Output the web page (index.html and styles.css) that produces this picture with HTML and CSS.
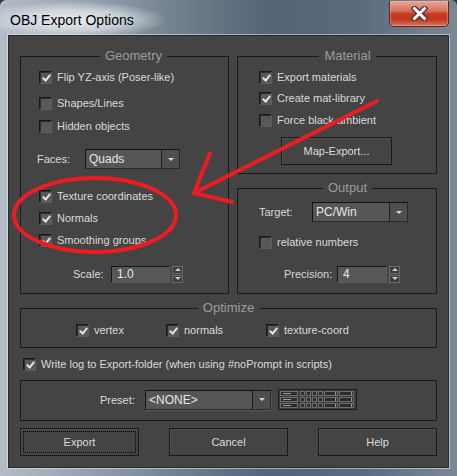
FILE: index.html
```html
<!DOCTYPE html>
<html>
<head>
<meta charset="utf-8">
<title>OBJ Export Options</title>
<link rel="stylesheet" href="styles.css">
</head>
<body>
<div class="window">
  <div class="titlebar">
    <span class="title">OBJ Export Options</span>
    <div class="close">
      <svg width="17" height="15" viewBox="0 0 17 15"><path d="M3.5 2.5 L13.5 12.5 M13.5 2.5 L3.5 12.5" stroke="#4a3434" stroke-width="5.5" stroke-linecap="square" fill="none"/><path d="M3.5 2.5 L13.5 12.5 M13.5 2.5 L3.5 12.5" stroke="#ffffff" stroke-width="3" stroke-linecap="square" fill="none"/></svg>
    </div>
  </div>
  <div class="client">
    <div class="top">
      <div class="group geo">
        <div class="legend">Geometry</div>
        <div class="row mt10"><span class="cb on"></span>Flip YZ-axis (Poser-like)</div>
        <div class="row mt6"><span class="cb"></span>Shapes/Lines</div>
        <div class="row mt3"><span class="cb"></span>Hidden objects</div>
        <div class="row mt13">
          <span class="lbl faces-lbl">Faces:</span>
          <div class="dd dd-faces"><span class="dd-text">Quads</span><span class="dd-btn"></span></div>
        </div>
        <div class="row mt17"><span class="cb on"></span>Texture coordinates</div>
        <div class="row mt2"><span class="cb on"></span>Normals</div>
        <div class="row mt2"><span class="cb on"></span>Smoothing groups</div>
        <div class="row mt14">
          <span class="lbl scale-lbl">Scale:</span>
          <div class="num scale-num">1.0</div>
          <div class="spin"><span class="up"></span><span class="down"></span></div>
        </div>
      </div>
      <div class="rcol">
        <div class="group mat">
          <div class="legend">Material</div>
          <div class="row mt10"><span class="cb on"></span>Export materials</div>
          <div class="row mt1"><span class="cb on"></span>Create mat-library</div>
          <div class="row mt2"><span class="cb"></span>Force black ambient</div>
          <div class="btn map-btn">Map-Export...</div>
        </div>
        <div class="group out">
          <div class="legend">Output</div>
          <div class="row mt13">
            <span class="lbl target-lbl">Target:</span>
            <div class="dd dd-target"><span class="dd-text">PC/Win</span><span class="dd-btn"></span></div>
          </div>
          <div class="row mt10"><span class="cb"></span>relative numbers</div>
          <div class="row mt12">
            <span class="lbl prec-lbl">Precision:</span>
            <div class="num prec-num">4</div>
            <div class="spin"><span class="up"></span><span class="down"></span></div>
          </div>
        </div>
      </div>
    </div>
    <div class="group opt">
      <div class="legend">Optimize</div>
      <div class="row mt11 opt-row">
        <span class="opt-item w90"><span class="cb on"></span>vertex</span>
        <span class="opt-item w100"><span class="cb on"></span>normals</span>
        <span class="opt-item"><span class="cb on"></span>texture-coord</span>
      </div>
    </div>
    <div class="row log-row"><span class="cb on"></span>Write log to Export-folder (when using #noPrompt in scripts)</div>
    <div class="group preset">
      <div class="row preset-row">
        <span class="lbl preset-lbl">Preset:</span>
        <div class="dd dd-preset"><span class="dd-text">&lt;NONE&gt;</span><span class="dd-btn"></span></div>
        <svg class="preset-icon" width="79" height="21" viewBox="0 0 79 21">
          <rect x="0.5" y="0.5" width="78" height="20" fill="#3c3c3c" stroke="#1c1c1c"/>
          <g fill="#2c2c2c" stroke="#6e6e6e" stroke-width="1">
            <rect x="2.5" y="2.5" width="17" height="4"/>
            <rect x="2.5" y="8.5" width="17" height="4"/>
            <rect x="2.5" y="14.5" width="17" height="4"/>
            <rect x="22.5" y="2.5" width="4" height="4"/><rect x="28.5" y="2.5" width="4" height="4"/><rect x="34.5" y="2.5" width="4" height="4"/><rect x="40.5" y="2.5" width="4" height="4"/>
            <rect x="22.5" y="8.5" width="4" height="4"/><rect x="28.5" y="8.5" width="4" height="4"/><rect x="34.5" y="8.5" width="4" height="4"/><rect x="40.5" y="8.5" width="4" height="4"/>
            <rect x="22.5" y="14.5" width="4" height="4"/><rect x="28.5" y="14.5" width="4" height="4"/><rect x="34.5" y="14.5" width="4" height="4"/><rect x="40.5" y="14.5" width="4" height="4"/>
            <rect x="46.5" y="2.5" width="13" height="4"/><rect x="46.5" y="8.5" width="13" height="4"/><rect x="46.5" y="14.5" width="13" height="4"/>
            <rect x="61.5" y="2.5" width="14" height="4"/><rect x="61.5" y="8.5" width="14" height="4"/><rect x="61.5" y="14.5" width="14" height="4"/>
          </g>
          <g fill="#9a9a9a">
            <rect x="5" y="4" width="8" height="1"/><rect x="5" y="10" width="8" height="1"/><rect x="5" y="16" width="8" height="1"/>
            <rect x="57" y="3" width="1" height="3"/><rect x="57" y="9" width="1" height="3"/><rect x="57" y="15" width="1" height="3"/>
            <rect x="73" y="3" width="1" height="3"/><rect x="73" y="9" width="1" height="3"/><rect x="73" y="15" width="1" height="3"/>
          </g>
        </svg>
      </div>
    </div>
    <div class="buttons">
      <div class="btn action focus">Export</div>
      <div class="btn action">Cancel</div>
      <div class="btn action">Help</div>
    </div>
  </div>
  <svg class="annot" width="457" height="476" viewBox="0 0 457 476">
    <ellipse cx="95" cy="215" rx="81" ry="37" fill="none" stroke="#ec1c24" stroke-width="4"/>
    <path d="M377 101 L194 193 M194 193 L210 153 M194 193 L232 202" fill="none" stroke="#ec1c24" stroke-width="4" stroke-linecap="round" stroke-linejoin="round"/>
  </svg>
</div>
</body>
</html>
```
FILE: styles.css
```css
html, body {
  margin: 0;
  padding: 0;
  background: #2e3640;
}
body {
  width: 457px;
  height: 476px;
  overflow: hidden;
  font-family: "Liberation Sans", Arial, sans-serif;
}
.window {
  position: relative;
  width: 457px;
  height: 476px;
  display: flex;
  flex-direction: column;
  box-sizing: border-box;
  border-radius: 6px 6px 0 0;
  background: linear-gradient(90deg, #b2bcc6 0%, #9eaab6 14%, #74828f 38%, #556477 58%, #5a697c 78%, #7c8894 100%);
}
.titlebar {
  height: 35px;
  flex: none;
  display: flex;
  justify-content: space-between;
  align-items: flex-start;
  padding: 0 8px 0 10px;
  background: radial-gradient(ellipse 95px 19px at 72px 20px, rgba(236,240,242,0.95) 0%, rgba(220,226,230,0.75) 55%, rgba(200,210,218,0) 100%);
}
.title {
  margin-top: 12px;
  font-size: 14px;
  line-height: 16px;
  color: #000;
}
.close {
  width: 60px;
  height: 26px;
  margin-top: 1px;
  box-sizing: border-box;
  border: 1px solid #5a2a22;
  border-top: none;
  border-radius: 0 0 5px 5px;
  background: linear-gradient(180deg, #e6a89a 0%, #d9715c 40%, #c5391f 52%, #c23a22 75%, #d9785f 100%);
  box-shadow: inset 0 0 0 1px rgba(255,200,190,0.35);
  display: flex;
  align-items: center;
  justify-content: center;
}
.client {
  margin: 0 8px;
  height: 433px;
  box-sizing: border-box;
  border: 1px solid #2a2a2a;
  box-shadow: 0 0 0 1px rgba(230,236,240,0.55);
  background: #444444;
  padding: 20px 11px 0 11px;
  display: flex;
  flex-direction: column;
  color: #dcdcdc;
}
.top {
  display: grid;
  grid-template-columns: 209px 200px;
  column-gap: 8px;
  height: 238px;
}
.rcol {
  display: flex;
  flex-direction: column;
}
.group {
  box-sizing: border-box;
  border: 1px solid #1a1a1a;
  display: flex;
  flex-direction: column;
}
.legend {
  align-self: center;
  height: 14px;
  line-height: 14px;
  margin: -8px 0 -6px;
  padding: 0 5px;
  background: #444444;
  color: #9c9c9c;
  font-size: 13px;
}
.geo { padding-left: 18px; }
.mat { height: 118px; padding-left: 21px; }
.out { height: 106px; margin-top: 14px; padding-left: 21px; }
.row {
  display: flex;
  align-items: center;
  height: 20px;
  font-size: 11px;
  color: #dadada;
  white-space: nowrap;
}
.mt1 { margin-top: 1px; }
.mt2 { margin-top: 2px; }
.mt3 { margin-top: 3px; }
.mt6 { margin-top: 6px; }
.mt10 { margin-top: 10px; }
.mt11 { margin-top: 11px; }
.mt12 { margin-top: 12px; }
.mt13 { margin-top: 13px; }
.mt14 { margin-top: 14px; }
.mt17 { margin-top: 17px; }
.cb {
  position: relative;
  flex: none;
  width: 13px;
  height: 13px;
  box-sizing: border-box;
  border: 1px solid;
  border-color: #181818 #5e5e5e #5e5e5e #181818;
  background: #585858;
  box-shadow: inset 1px 1px 0 #2e2e2e;
  margin-right: 5px;
}
.cb.on::after {
  content: "";
  position: absolute;
  left: 4px;
  top: 1px;
  width: 3px;
  height: 6px;
  border: solid #e4e4e4;
  border-width: 0 2px 2px 0;
  transform: rotate(40deg);
}
.lbl {
  flex: none;
  font-size: 11px;
  color: #dadada;
}
.faces-lbl { width: 48px; margin-left: -2px; }
.scale-lbl { width: 38px; margin-left: 34px; }
.target-lbl { width: 53px; }
.prec-lbl { width: 53px; margin-left: 25px; }
.dd {
  display: flex;
  height: 20px;
  box-sizing: border-box;
  border: 1px solid;
  border-color: #121212 #2a2a2a #2a2a2a #121212;
  background: #565656;
  color: #e6e6e6;
  font-size: 12px;
}
.dd-text {
  flex: 1;
  padding-left: 3px;
  line-height: 18px;
}
.dd-btn {
  width: 18px;
  box-sizing: border-box;
  border-left: 1px solid #1c1c1c;
  background: #4e4e4e;
  display: flex;
  align-items: center;
  justify-content: center;
}
.dd-btn::before {
  content: "";
  border-left: 3px solid transparent;
  border-right: 3px solid transparent;
  border-top: 3px solid #d8d8d8;
}
.dd-faces { width: 95px; }
.dd-target { width: 96px; }
.dd-preset { width: 126px; box-shadow: 1px 1px 0 #555; }
.num {
  height: 17px;
  box-sizing: border-box;
  border: 1px solid;
  border-color: #161616 #5a5a5a #5a5a5a #161616;
  background: #575757;
  color: #e6e6e6;
  font-size: 12px;
  line-height: 15px;
  padding-left: 5px;
}
.scale-num { width: 59px; }
.prec-num { width: 50px; }
.spin {
  margin-left: 2px;
  width: 11px;
  height: 17px;
  display: flex;
  flex-direction: column;
  gap: 1px;
}
.spin span {
  flex: 1;
  box-sizing: border-box;
  border: 1px solid #6c6c6c;
  background: #3c3c3c;
  display: flex;
  align-items: center;
  justify-content: center;
}
.spin .up::before {
  content: "";
  border-left: 3px solid transparent;
  border-right: 3px solid transparent;
  border-bottom: 3px solid #d0d0d0;
}
.spin .down::before {
  content: "";
  border-left: 3px solid transparent;
  border-right: 3px solid transparent;
  border-top: 3px solid #d0d0d0;
}
.btn {
  box-sizing: border-box;
  border: 1px solid #1a1a1a;
  box-shadow: inset 1px 1px 0 #4e4e4e;
  background: #444444;
  color: #dcdcdc;
  font-size: 11px;
  display: flex;
  align-items: center;
  justify-content: center;
}
.map-btn {
  margin-top: 7px;
  margin-left: 22px;
  width: 111px;
  height: 28px;
}
.opt {
  margin-top: 14px;
  height: 40px;
}
.opt-row { padding-left: 55px; }
.opt-item {
  display: flex;
  align-items: center;
}
.w90 { width: 90px; }
.w100 { width: 100px; }
.log-row {
  margin-top: 6px;
  padding-left: 3px;
}
.preset {
  margin-top: 6px;
  height: 41px;
}
.preset-row {
  margin-top: 8px;
  height: 21px;
  padding-left: 79px;
}
.preset-lbl { width: 45px; }
.preset-icon { margin-left: 7px; display: block; }
.buttons {
  margin-top: 7px;
  display: flex;
  justify-content: space-between;
}
.action {
  width: 119px;
  height: 28px;
}
.focus {
  outline: 1px dotted #000;
  outline-offset: -4px;
}
.annot {
  position: absolute;
  left: 0;
  top: 0;
  pointer-events: none;
}
```
